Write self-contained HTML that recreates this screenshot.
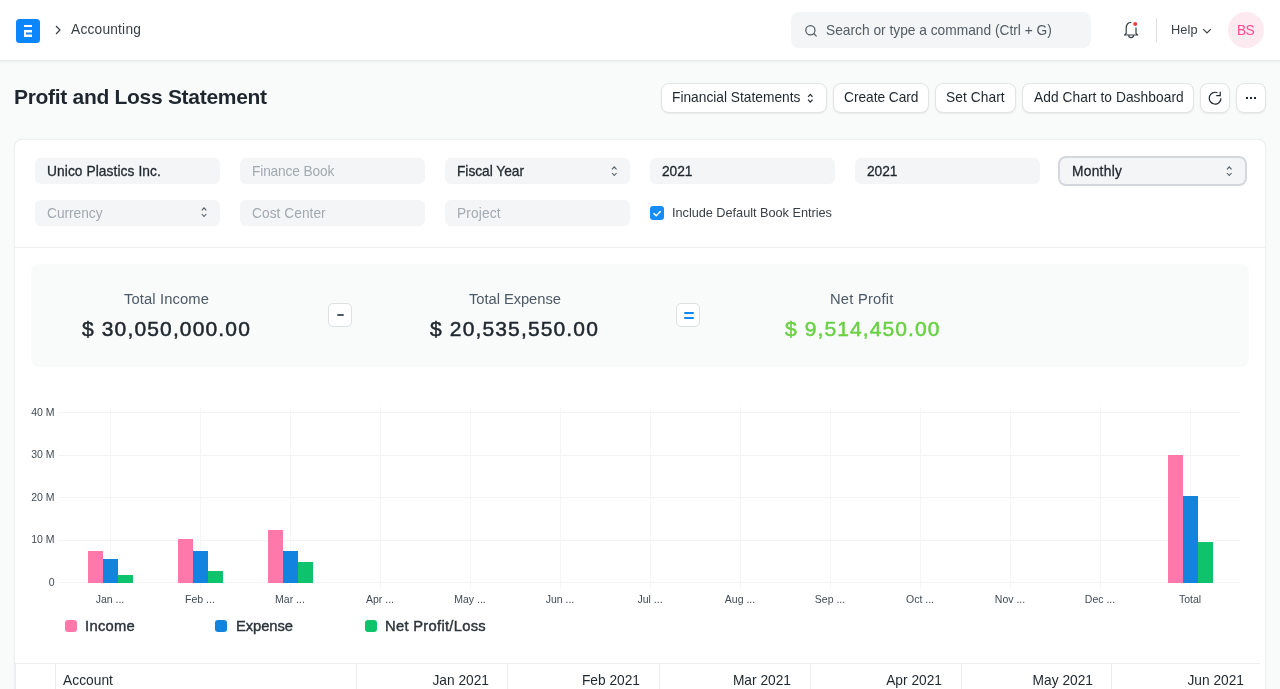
<!DOCTYPE html>
<html><head><meta charset="utf-8">
<style>
*{box-sizing:border-box;margin:0;padding:0}
html,body{width:1280px;height:689px;overflow:hidden}
body{background:#f9fafa;font-family:"Liberation Sans",sans-serif;color:#1f272e;position:relative}
.t{position:absolute;white-space:nowrap;will-change:transform}
.abs{position:absolute}
.nav{position:absolute;left:0;top:0;width:1280px;height:61px;background:#fff;border-bottom:1px solid #e6e8ea;box-shadow:0 1px 3px rgba(0,0,0,0.05)}
.search{position:absolute;left:791px;top:12px;width:300px;height:36px;background:#f4f5f6;border-radius:8px}
.btn{position:absolute;top:83px;height:29.5px;background:#fff;border:1px solid #e2e4e6;border-radius:8px;box-shadow:0 1px 2px rgba(0,0,0,0.07)}
.card{position:absolute;left:14px;top:139px;width:1252px;height:600px;background:#fff;border:1px solid #eef0f2;border-radius:8px;box-shadow:0 0 2px rgba(0,0,0,0.05)}
.fld{position:absolute;height:26px;background:#f4f5f6;border-radius:6px}
.hr{position:absolute;left:15px;width:1250px;height:1px;background:#eef0f2}
.summary{position:absolute;left:31px;top:264px;width:1218px;height:103px;background:#f9fafa;border-radius:8px}
.op{position:absolute;top:303px;width:24px;height:24px;background:#fff;border:1px solid #dde1e4;border-radius:5px}
.ylab{position:absolute;left:0;width:54.5px;font-size:10.5px;line-height:10px;color:#404a54;text-align:right;will-change:transform}
.xlab{position:absolute;top:594px;width:100px;font-size:10.5px;line-height:10px;color:#404a54;text-align:center;will-change:transform}
.gh{position:absolute;left:59px;width:1181px;height:1px;background:#f1f3f5}
.gv{position:absolute;top:407px;width:1px;height:182px;background:#f4f5f7}
.bar{position:absolute}
.pink{background:#ff78aa}
.blue{background:#1284de}
.green{background:#0dc46c}
.leg{position:absolute;top:620px;width:12px;height:12px;border-radius:3px}
.vl{position:absolute;top:664px;width:1px;height:30px;background:#ebeef0}
.th{position:absolute;top:674px;width:120px;font-size:13.75px;line-height:14px;color:#1f272e;text-align:right;will-change:transform}
</style></head><body>
<div class="nav"></div>
<svg class="abs" style="left:16px;top:19px" width="24" height="24" viewBox="0 0 24 24"><rect width="24" height="24" rx="3.5" fill="#0c86fd"/><path fill="#fff" d="M8 6h8v2.1H8zM8 11h8v2.6h-6v2h6V18H8z"/></svg>
<svg class="abs" style="left:50px;top:20px" width="16" height="20" viewBox="50 20 16 20"><path d="M56 26l4 4-4 4" fill="none" stroke="#383f46" stroke-width="1.2"/></svg>
<div class="t" id="crumb" style="left:71.00px;top:22.71px;font-size:13.75px;line-height:13.75px;font-weight:normal;color:#383f46;letter-spacing:0.206px">Accounting</div>
<div class="search"></div>
<svg class="abs" style="left:800px;top:20px" width="22" height="20" viewBox="800 20 22 20"><circle cx="810.4" cy="30.2" r="4.6" fill="none" stroke="#525c65" stroke-width="1.25"/><path d="M813.7 33.5L816.6 36.4" stroke="#525c65" stroke-width="1.25"/></svg>
<div class="t" id="search" style="left:825.75px;top:23.71px;font-size:13.75px;line-height:13.75px;font-weight:normal;color:#525c65;letter-spacing:0.000px">Search or type a command (Ctrl + G)</div>
<svg class="abs" style="left:1120px;top:18px" width="22" height="24" viewBox="1120 18 22 24"><g fill="none" stroke="#383f46" stroke-width="1.2" stroke-linejoin="round"><path d="M1131.2 22.3C1128 22.3 1126.2 25 1126.2 28.5V33.3L1124.6 35H1137.6L1136 33.3V27.5"/><path d="M1128.7 35V35.3A2.4 2.4 0 0 0 1133.5 35.3V35"/></g><circle cx="1135.2" cy="24" r="2" fill="#ff3b3b"/></svg>
<div class="abs" style="left:1156px;top:18px;width:1px;height:24px;background:#dde1e5"></div>
<div class="t" id="help" style="left:1170.70px;top:24.46px;font-size:12.75px;line-height:12.75px;font-weight:normal;color:#383f46;letter-spacing:0.117px">Help</div>
<svg class="abs" style="left:1200px;top:26px" width="14" height="10" viewBox="1200 26 14 10"><path d="M1203.2 29.2l3.8 3.8 3.8-3.8" fill="none" stroke="#383f46" stroke-width="1.2"/></svg>
<div class="abs" style="left:1228px;top:12px;width:36px;height:36px;border-radius:50%;background:#fde9f0"></div>
<div class="t" id="bs" style="left:1236.60px;top:23.51px;font-size:13.75px;line-height:13.75px;font-weight:normal;color:#ff4a8d;letter-spacing:-0.550px">BS</div>
<div class="t" id="title" style="left:14.45px;top:86.25px;font-size:21.0px;line-height:21.0px;font-weight:bold;color:#1f272e;letter-spacing:-0.298px">Profit and Loss Statement</div>
<div class="btn" style="left:661px;width:166px"></div>
<div class="btn" style="left:833px;width:96px"></div>
<div class="btn" style="left:935px;width:81px"></div>
<div class="btn" style="left:1022px;width:172px"></div>
<div class="btn" style="left:1200px;width:30px"></div>
<div class="btn" style="left:1236px;width:30px"></div>
<div class="t" id="b1" style="left:672.00px;top:90.71px;font-size:13.75px;line-height:13.75px;font-weight:normal;color:#1f272e;letter-spacing:0.000px">Financial Statements</div><div class="t" id="b2" style="left:844.30px;top:90.71px;font-size:13.75px;line-height:13.75px;font-weight:normal;color:#1f272e;letter-spacing:-0.040px">Create Card</div><div class="t" id="b3" style="left:946.40px;top:90.71px;font-size:13.75px;line-height:13.75px;font-weight:normal;color:#1f272e;letter-spacing:0.069px">Set Chart</div><div class="t" id="b4" style="left:1033.90px;top:90.71px;font-size:13.75px;line-height:13.75px;font-weight:normal;color:#1f272e;letter-spacing:0.067px">Add Chart to Dashboard</div>
<svg class="abs" style="left:805px;top:90px" width="12" height="16" viewBox="805 90 12 16"><path d="M808.1 96.9l2.2-2.6 2.2 2.6M808.1 99.6l2.2 2.6 2.2-2.6" fill="none" stroke="#1f272e" stroke-width="1.1"/></svg>
<svg class="abs" style="left:1205px;top:88px" width="20" height="20" viewBox="1205 88 20 20"><path d="M1221 98.3A5.9 5.9 0 1 1 1217.5 92.8" fill="none" stroke="#1f272e" stroke-width="1.2"/><path d="M1216.3 95.6H1220.2V91.8" fill="none" stroke="#1f272e" stroke-width="1.2"/></svg>
<svg class="abs" style="left:1240px;top:92px" width="20" height="12" viewBox="1240 92 20 12"><rect x="1246" y="97" width="2" height="2" fill="#1f272e"/><rect x="1250" y="97" width="2" height="2" fill="#1f272e"/><rect x="1254" y="97" width="2" height="2" fill="#1f272e"/></svg>
<div class="card"></div>
<div class="fld" style="left:35px;top:158px;width:185px"></div>
<div class="fld" style="left:240px;top:158px;width:185px"></div>
<div class="fld" style="left:445px;top:158px;width:185px"></div>
<div class="fld" style="left:650px;top:158px;width:185px"></div>
<div class="fld" style="left:855px;top:158px;width:185px"></div>
<div class="fld" style="left:1060px;top:158px;width:185px;box-shadow:0 0 0 2px #d4d8dc;border-radius:6px"></div>
<div class="fld" style="left:35px;top:200px;width:185px"></div>
<div class="fld" style="left:240px;top:200px;width:185px"></div>
<div class="fld" style="left:445px;top:200px;width:185px"></div>
<div class="t" id="f1" style="left:46.85px;top:164.91px;font-size:13.75px;line-height:13.75px;font-weight:normal;-webkit-text-stroke:0.3px #1f272e;color:#1f272e;letter-spacing:0.083px">Unico Plastics Inc.</div><div class="t" id="f2" style="left:251.50px;top:164.91px;font-size:13.75px;line-height:13.75px;font-weight:normal;color:#a1a9b1;letter-spacing:-0.159px">Finance Book</div><div class="t" id="f3" style="left:456.75px;top:164.61px;font-size:13.75px;line-height:13.75px;font-weight:normal;-webkit-text-stroke:0.3px #1f272e;color:#1f272e;letter-spacing:-0.030px">Fiscal Year</div><div class="t" id="f4" style="left:662.00px;top:164.81px;font-size:13.75px;line-height:13.75px;font-weight:normal;-webkit-text-stroke:0.3px #1f272e;color:#1f272e;letter-spacing:-0.083px">2021</div><div class="t" id="f5" style="left:867.00px;top:164.81px;font-size:13.75px;line-height:13.75px;font-weight:normal;-webkit-text-stroke:0.3px #1f272e;color:#1f272e;letter-spacing:-0.083px">2021</div><div class="t" id="f6" style="left:1071.55px;top:164.91px;font-size:13.75px;line-height:13.75px;font-weight:normal;-webkit-text-stroke:0.3px #1f272e;color:#1f272e;letter-spacing:0.292px">Monthly</div><div class="t" id="f7" style="left:47.10px;top:206.61px;font-size:13.75px;line-height:13.75px;font-weight:normal;color:#a1a9b1;letter-spacing:-0.036px">Currency</div><div class="t" id="f8" style="left:251.70px;top:207.11px;font-size:13.75px;line-height:13.75px;font-weight:normal;color:#a1a9b1;letter-spacing:0.030px">Cost Center</div><div class="t" id="f9" style="left:456.50px;top:207.11px;font-size:13.75px;line-height:13.75px;font-weight:normal;color:#a1a9b1;letter-spacing:0.125px">Project</div>
<svg class="abs" style="left:0;top:150px" width="1280" height="80" viewBox="0 150 1280 80"><g fill="none" stroke="#4c5a67" stroke-width="1.1"><path d="M612 169.3l2.25-2.5 2.25 2.5M612 173l2.25 2.5 2.25-2.5"/><path d="M1227 169.3l2.25-2.5 2.25 2.5M1227 173l2.25 2.5 2.25-2.5"/><path d="M201.8 210.3l2.25-2.5 2.25 2.5M201.8 214l2.25 2.5 2.25-2.5"/></g></svg>
<svg class="abs" style="left:650px;top:206px" width="14" height="14" viewBox="0 0 14 14"><rect width="14" height="14" rx="3" fill="#168cfa"/><path d="M3.9 7.6l2.4 2.1 4-4.3" fill="none" stroke="#fff" stroke-width="1.4" stroke-linecap="round" stroke-linejoin="round"/></svg>
<div class="t" id="chk" style="left:671.50px;top:206.56px;font-size:12.75px;line-height:12.75px;font-weight:normal;color:#383f46;letter-spacing:-0.037px">Include Default Book Entries</div>
<div class="hr" style="top:247px"></div>
<div class="summary"></div>
<div class="t" id="s1" style="left:123.75px;top:292.36px;font-size:14.75px;line-height:14.75px;font-weight:normal;color:#4c5a67;letter-spacing:0.114px">Total Income</div><div class="t" id="v1" style="left:82.25px;top:318.25px;font-size:21.0px;line-height:21.0px;font-weight:normal;-webkit-text-stroke:0.5px #1f272e;color:#1f272e;letter-spacing:1.143px">$ 30,050,000.00</div><div class="t" id="s2" style="left:468.50px;top:291.86px;font-size:14.75px;line-height:14.75px;font-weight:normal;color:#4c5a67;letter-spacing:-0.062px">Total Expense</div><div class="t" id="v2" style="left:430.45px;top:318.25px;font-size:21.0px;line-height:21.0px;font-weight:normal;-webkit-text-stroke:0.5px #1f272e;color:#1f272e;letter-spacing:1.146px">$ 20,535,550.00</div><div class="t" id="s3" style="left:829.90px;top:291.86px;font-size:14.75px;line-height:14.75px;font-weight:normal;color:#4c5a67;letter-spacing:0.206px">Net Profit</div><div class="t" id="v3" style="left:785.05px;top:318.25px;font-size:21.0px;line-height:21.0px;font-weight:normal;-webkit-text-stroke:0.5px #68d142;color:#68d142;letter-spacing:1.104px">$ 9,514,450.00</div>
<div class="op" style="left:328px"><div class="abs" style="left:8px;top:10px;width:7px;height:2px;border-radius:1px;background:#4c5a67"></div></div>
<div class="op" style="left:676px"><div class="abs" style="left:6.5px;top:8px;width:10px;height:2px;border-radius:1px;background:#0a89f7"></div><div class="abs" style="left:6.5px;top:12.5px;width:10px;height:2.2px;border-radius:1px;background:#0a89f7"></div></div>
<div class="gh" style="top:412.0px"></div>
<div class="ylab" style="top:406.50px">40 M</div>
<div class="gh" style="top:454.5px"></div>
<div class="ylab" style="top:449.00px">30 M</div>
<div class="gh" style="top:497.0px"></div>
<div class="ylab" style="top:491.50px">20 M</div>
<div class="gh" style="top:539.5px"></div>
<div class="ylab" style="top:534.00px">10 M</div>
<div class="gh" style="top:582.0px"></div>
<div class="ylab" style="top:576.50px">0</div>
<div class="gv" style="left:109.5px"></div>
<div class="xlab" style="left:60px">Jan ...</div>
<div class="gv" style="left:199.5px"></div>
<div class="xlab" style="left:150px">Feb ...</div>
<div class="gv" style="left:289.5px"></div>
<div class="xlab" style="left:240px">Mar ...</div>
<div class="gv" style="left:379.5px"></div>
<div class="xlab" style="left:330px">Apr ...</div>
<div class="gv" style="left:469.5px"></div>
<div class="xlab" style="left:420px">May ...</div>
<div class="gv" style="left:559.5px"></div>
<div class="xlab" style="left:510px">Jun ...</div>
<div class="gv" style="left:649.5px"></div>
<div class="xlab" style="left:600px">Jul ...</div>
<div class="gv" style="left:739.5px"></div>
<div class="xlab" style="left:690px">Aug ...</div>
<div class="gv" style="left:829.5px"></div>
<div class="xlab" style="left:780px">Sep ...</div>
<div class="gv" style="left:919.5px"></div>
<div class="xlab" style="left:870px">Oct ...</div>
<div class="gv" style="left:1009.5px"></div>
<div class="xlab" style="left:960px">Nov ...</div>
<div class="gv" style="left:1099.5px"></div>
<div class="xlab" style="left:1050px">Dec ...</div>
<div class="gv" style="left:1189.5px"></div>
<div class="xlab" style="left:1140px">Total</div>
<div class="bar pink" style="left:87.5px;top:551.3px;width:15px;height:31.5px"></div>
<div class="bar blue" style="left:102.5px;top:559.0px;width:15px;height:23.8px"></div>
<div class="bar green" style="left:117.5px;top:575.0px;width:15px;height:7.8px"></div>
<div class="bar pink" style="left:177.5px;top:539.4px;width:15px;height:43.3px"></div>
<div class="bar blue" style="left:192.5px;top:550.9px;width:15px;height:31.9px"></div>
<div class="bar green" style="left:207.5px;top:571.1px;width:15px;height:11.7px"></div>
<div class="bar pink" style="left:267.5px;top:530.1px;width:15px;height:52.7px"></div>
<div class="bar blue" style="left:282.5px;top:550.9px;width:15px;height:31.9px"></div>
<div class="bar green" style="left:297.5px;top:562.2px;width:15px;height:20.6px"></div>
<div class="bar pink" style="left:1167.5px;top:455.1px;width:15px;height:127.7px"></div>
<div class="bar blue" style="left:1182.5px;top:495.5px;width:15px;height:87.3px"></div>
<div class="bar green" style="left:1197.5px;top:542.4px;width:15px;height:40.4px"></div>
<div class="leg pink" style="left:65px"></div>
<div class="leg blue" style="left:215px"></div>
<div class="leg green" style="left:365px"></div>
<div class="t" id="lg1" style="left:85.25px;top:618.86px;font-size:14.75px;line-height:14.75px;font-weight:normal;-webkit-text-stroke:0.4px #2b333b;color:#2b333b;letter-spacing:0.290px">Income</div><div class="t" id="lg2" style="left:235.60px;top:618.86px;font-size:14.75px;line-height:14.75px;font-weight:normal;-webkit-text-stroke:0.4px #2b333b;color:#2b333b;letter-spacing:-0.083px">Expense</div><div class="t" id="lg3" style="left:385.00px;top:618.86px;font-size:14.75px;line-height:14.75px;font-weight:normal;-webkit-text-stroke:0.4px #2b333b;color:#2b333b;letter-spacing:0.286px">Net Profit/Loss</div>
<div class="abs" style="left:15px;top:663px;width:1245px;height:1px;background:#ebeef0"></div>
<div class="vl" style="left:15px"></div>
<div class="vl" style="left:55px"></div>
<div class="vl" style="left:356px"></div>
<div class="vl" style="left:507px"></div>
<div class="vl" style="left:659px"></div>
<div class="vl" style="left:810px"></div>
<div class="vl" style="left:961px"></div>
<div class="vl" style="left:1111px"></div>
<div class="t" id="th0" style="left:63.40px;top:673.81px;font-size:13.75px;line-height:13.75px;font-weight:normal;color:#1f272e;letter-spacing:0.042px">Account</div>
<div class="th" style="left:369px">Jan 2021</div>
<div class="th" style="left:520px">Feb 2021</div>
<div class="th" style="left:671px">Mar 2021</div>
<div class="th" style="left:822px">Apr 2021</div>
<div class="th" style="left:973px">May 2021</div>
<div class="th" style="left:1124px">Jun 2021</div>
</body></html>
